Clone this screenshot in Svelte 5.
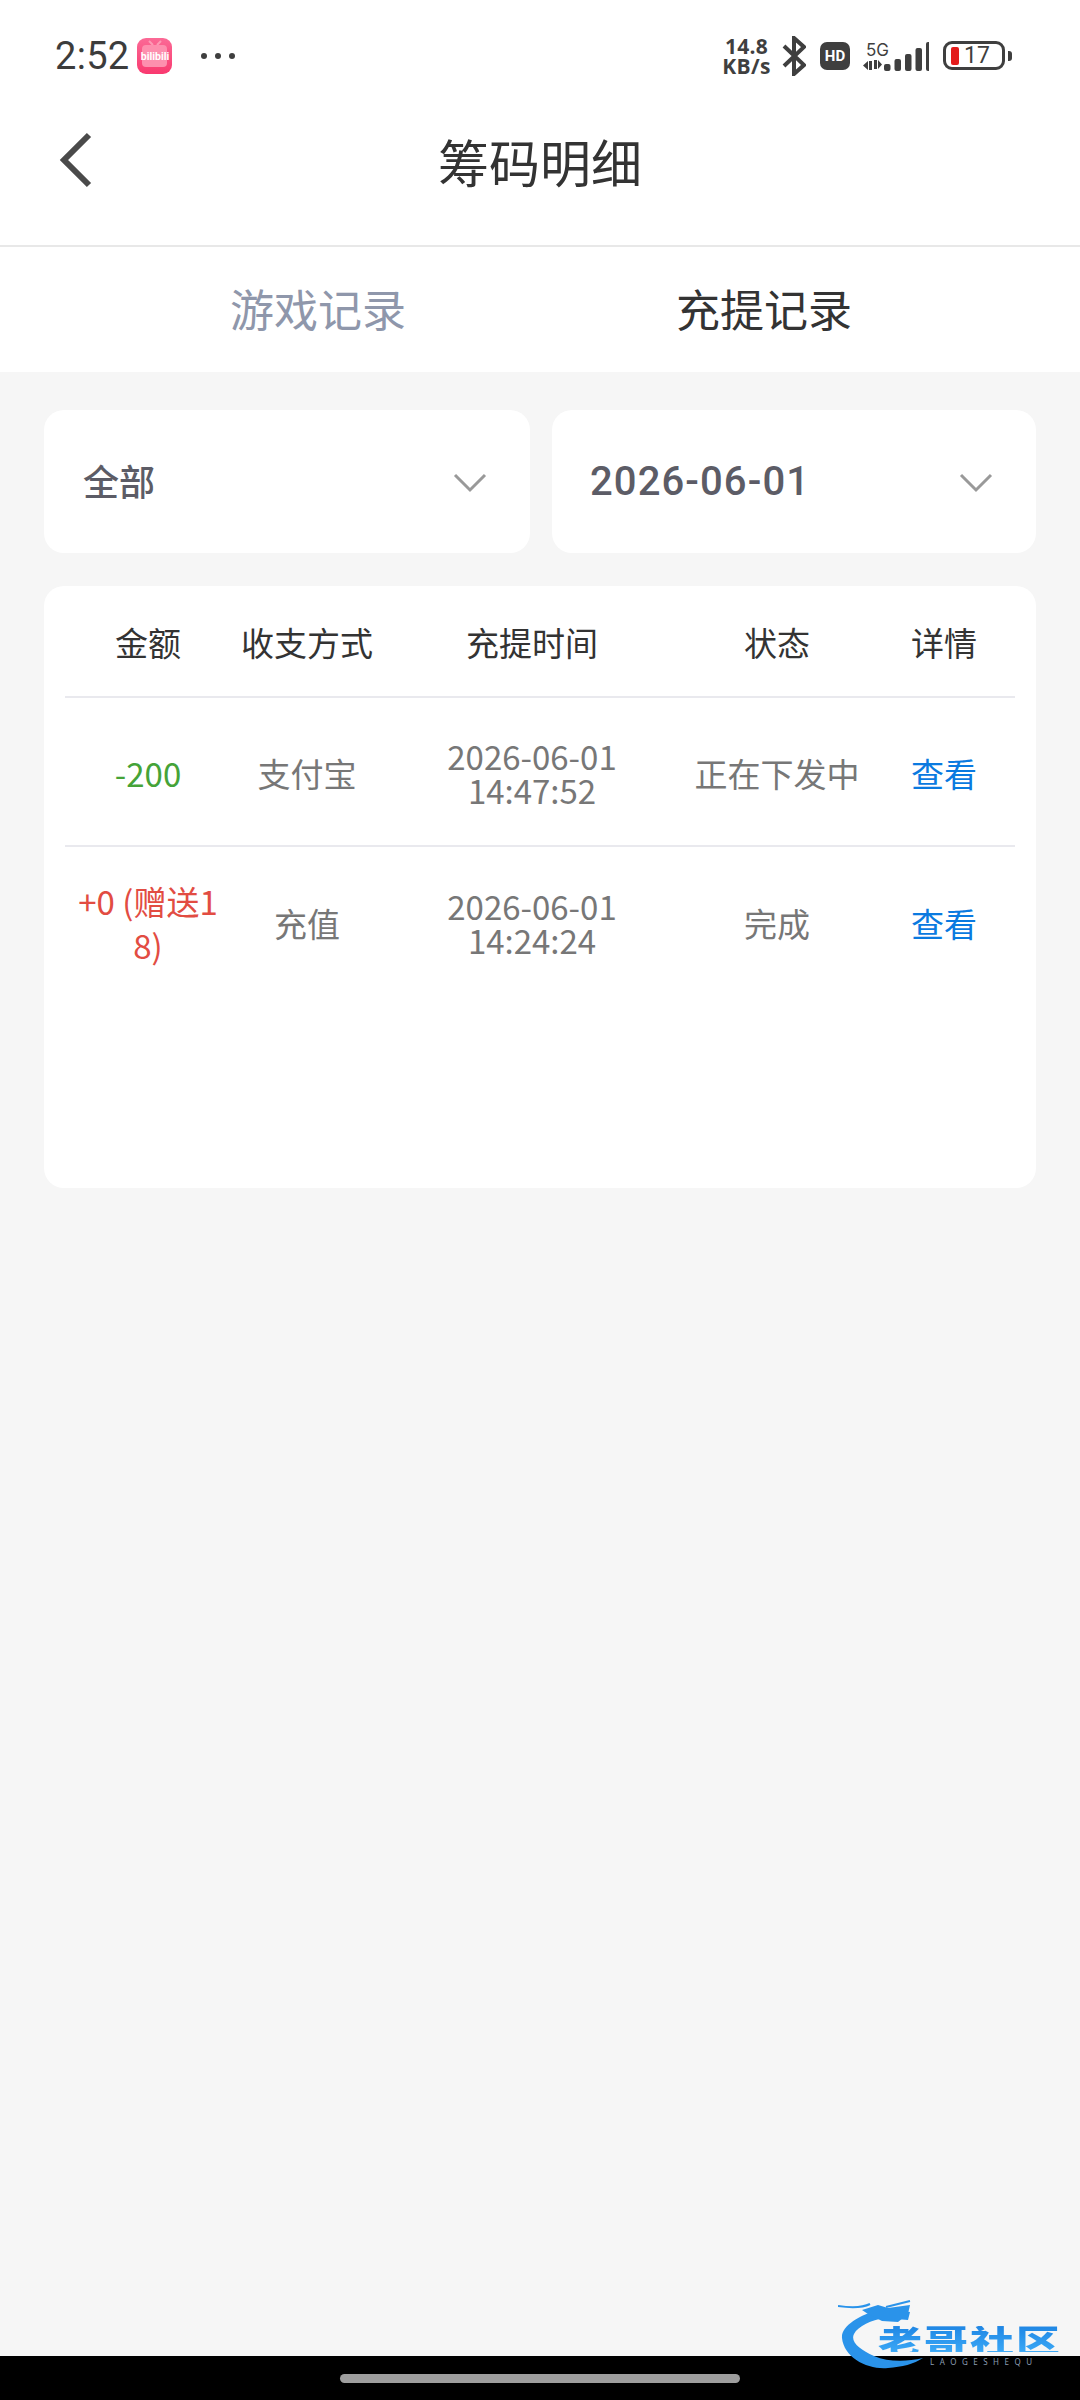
<script>
  const rows = [
    { amount: '-200', cls: 'green', method: '支付宝', date: '2026-06-01', time: '14:47:52', status: '正在下发中' },
    { amount: '+0 (赠送18)', cls: 'red', method: '充值', date: '2026-06-01', time: '14:24:24', status: '完成' }
  ];
  const bars = [7, 12, 17, 23, 29];
</script>

<div class="page">
  <div class="top">
    <div class="status">
      <div class="left">
        <span class="clock">2:52</span>
        <span class="bili">
          <svg class="tv" width="35" height="36" viewBox="0 0 35 36">
            <path d="M12 3l4 4M24 3l-4 4" stroke="#fd9ab5" stroke-width="2" fill="none"/>
            <rect x="5" y="7" width="25" height="22" rx="4" fill="#fd8fae"/>
          </svg>
          <span class="bili-t">bilibili</span>
        </span>
        <span class="dots"><i></i><i></i><i></i></span>
      </div>
      <div class="right">
        <span class="speed"><b>14.8</b><b>KB/s</b></span>
        <svg class="bt" width="24" height="40" viewBox="0 0 24 40"><path d="M2 10 L22 29 L12 38 L12 2 L22 11 L2 30" fill="none" stroke="#3f3f3f" stroke-width="4"/></svg>
        <span class="hd">HD</span>
        <span class="net">
          <span class="fiveg">5G</span>
          <svg width="66" height="30" viewBox="0 0 66 30">
            <path d="M5 20v9l-5-4.5zM6 20h3v9H6zM11 19h3v9h-3zM15 19l4 4.5-4 4.5z" fill="#3f3f3f"/>
            {#each bars as h, i}
              <rect x={21 + i * 10.5} y={30 - h} width="6.5" height={h} rx="2" fill="#3f3f3f"/>
            {/each}
          </svg>
        </span>
        <span class="battery">
          <span class="shell"><span class="fill"></span><span class="lvl">17</span></span>
          <span class="nub"></span>
        </span>
      </div>
    </div>
    <div class="nav">
      <svg class="back" width="36" height="56" viewBox="0 0 36 56"><path d="M31 3 L6 28 L31 53" fill="none" stroke="#4a4a4a" stroke-width="6"/></svg>
      <span class="title">筹码明细</span>
    </div>
  </div>

  <div class="tabs">
    <span class="tab off">游戏记录</span>
    <span class="tab on">充提记录</span>
  </div>

  <div class="content">
    <div class="filters">
      <div class="select">
        <span class="cn">全部</span>
        <svg width="34" height="22" viewBox="0 0 34 22"><path d="M2 3 L17 18 L32 3" fill="none" stroke="#999" stroke-width="3"/></svg>
      </div>
      <div class="select">
        <span class="date">2026-06-01</span>
        <svg width="34" height="22" viewBox="0 0 34 22"><path d="M2 3 L17 18 L32 3" fill="none" stroke="#999" stroke-width="3"/></svg>
      </div>
    </div>

    <div class="card">
      <div class="row head">
        <span>金额</span><span>收支方式</span><span>充提时间</span><span>状态</span><span>详情</span>
      </div>
      {#each rows as r}
        <div class="row body">
          <span class="amt {r.cls}">{r.amount}</span>
          <span>{r.method}</span>
          <span class="when"><span>{r.date}</span><span>{r.time}</span></span>
          <span>{r.status}</span>
          <span class="link">查看</span>
        </div>
      {/each}
    </div>
  </div>

  <div class="navbar"><span class="pill"></span></div>

  <div class="logo">
    <svg class="dragon" width="92" height="76" viewBox="0 0 92 76">
      <path d="M44 10 C20 18 3 28 4 40 C6 60 30 72 50 70 C64 69 76 66 85 60 C68 64 50 64 36 58 C22 52 12 44 16 36 C20 28 34 22 46 20 L70 22 L72 14 L56 12 Z" fill="#2a93ea"/>
      <path d="M24 12 L40 7 L50 10 L72 7 L70 16 L60 24 L44 23 L30 16 Z" fill="#2a93ea"/>
      <path d="M0 8 C14 10 24 10 32 6 M48 9 L72 3" fill="none" stroke="#2a93ea" stroke-width="2"/>
    </svg>
    <div class="logo-text">
      <span class="lt-cn">老哥社区</span>
      <span class="lt-en">LAOGESHEQU</span>
    </div>
  </div>
</div>

<style>
  :global(body) { margin: 0; }
  .page {
    position: relative;
    width: 1080px;
    height: 2400px;
    background: #f6f6f6;
    display: flex;
    flex-direction: column;
    font-family: "Noto Sans CJK SC", "Noto Sans", sans-serif;
    overflow: hidden;
  }
  .top { background: #fff; height: 245px; border-bottom: 2px solid #e8e8e8; }
  .status {
    height: 104px;
    box-sizing: border-box;
    padding: 7px 68px 0 55px;
    display: flex;
    justify-content: space-between;
    align-items: center;
  }
  .left { display: flex; align-items: center; height: 36px; }
  .clock { font: 400 38px/36px Roboto, sans-serif; color: #3c3c3c; letter-spacing: 0.3px; }
  .bili {
    position: relative;
    width: 35px; height: 36px; margin-left: 8px; border-radius: 9px;
    background: linear-gradient(#fb6a96, #f9396f);
    display: flex; align-items: center; justify-content: center; overflow: hidden;
  }
  .tv { position: absolute; left: 0; top: 0; }
  .bili-t { position: relative; font: 700 10.5px/12px Roboto, sans-serif; color: #fff; margin-top: 2px; }
  .dots { display: flex; gap: 8px; margin-left: 29px; }
  .dots i { width: 6px; height: 6px; border-radius: 50%; background: #3f3f3f; }
  .right { display: flex; align-items: center; height: 44px; color: #3f3f3f; }
  .speed { display: flex; flex-direction: column; align-items: center; width: 47px; margin-right: 12px; }
  .speed b { font: 700 21px/20px "Open Sans", sans-serif; letter-spacing: 0.3px; white-space: nowrap; }
  .bt { margin-right: 14px; }
  .hd {
    width: 30px; height: 28px; border-radius: 7px; background: #3f3f3f; color: #fff;
    font: 700 15px/28px Roboto, sans-serif; text-align: center; margin-right: 13px;
  }
  .net { position: relative; width: 66px; height: 30px; margin-right: 14px; }
  .net svg { position: absolute; left: 0; top: 0; }
  .fiveg { position: absolute; left: 3px; top: 0; font: 400 17px/18px Inter, sans-serif; }
  .battery { display: flex; align-items: center; }
  .shell {
    width: 62px; height: 29px; border: 3px solid #3f3f3f; border-radius: 9px;
    display: flex; align-items: center; padding-left: 5px; box-sizing: border-box;
  }
  .fill { width: 8px; height: 18px; background: #e31c1c; border-radius: 2px; }
  .lvl { font: 400 23px/23px Roboto, sans-serif; margin-left: 5px; }
  .nub { width: 4px; height: 10px; background: #3f3f3f; border-radius: 0 3px 3px 0; margin-left: 3px; }

  .nav { height: 141px; position: relative; display: flex; align-items: center; justify-content: center; padding-bottom: 27px; box-sizing: border-box; }
  .back { position: absolute; left: 58px; top: 28px; }
  .title { font-size: 51px; line-height: 60px; color: #333; }

  .tabs { height: 125px; background: #fff; display: grid; grid-template-columns: 1fr 1fr; }
  .tab { font-size: 44px; line-height: 123px; text-align: center; }
  .off { color: #8f97ab; padding-left: 96px; }
  .on { color: #333; padding-right: 92px; }

  .content { padding: 38px 44px 0; display: flex; flex-direction: column; gap: 33px; }
  .filters { display: grid; grid-template-columns: 486px 484px; gap: 22px; }
  .select {
    height: 143px; background: #fff; border-radius: 20px;
    display: flex; align-items: center; justify-content: space-between;
    padding: 0 43px 0 39px; box-sizing: border-box;
  }
  .select svg { margin-top: 2px; }
  .cn, .date { font-size: 36px; line-height: 50px; color: #5c5c66; padding-bottom: 3px; }
  .cn { font-weight: 500; }
  .date { font-family: Roboto, sans-serif; font-size: 40px; font-weight: 500; letter-spacing: 1.1px; padding-bottom: 0; margin-left: -1px; }
  .card { height: 602px; background: #fff; border-radius: 20px; padding: 0 21px; box-sizing: border-box; }
  .row {
    display: grid;
    grid-template-columns: 166px 152px 298px 192px 142px;
    align-items: center;
    text-align: center;
    border-bottom: 2px solid #e9e9ee;
    box-sizing: border-box;
    font-size: 33px;
    padding-top: 2px;
  }
  .row:last-child { border-bottom: none; }
  .head { height: 112px; color: #333; }
  .body { height: 149px; color: #777; }
  .amt { line-height: 44px; word-break: break-all; padding: 0 8px; }
  .green { color: #45a338; }
  .red { color: #e24c42; }
  .when { display: flex; flex-direction: column; line-height: 34px; }
  .link { color: #0a7ae0; }

  .logo { position: absolute; left: 838px; top: 2298px; display: flex; align-items: flex-start; }
  .dragon { flex: none; filter: blur(0.6px); }
  .logo-text { display: flex; flex-direction: column; margin: 23px 0 0 -52px; width: 190px; }
  .lt-cn {
    font-size: 44px; line-height: 36px; font-weight: 900; letter-spacing: 2px; white-space: nowrap;
    transform: scaleY(0.72);
    background: linear-gradient(#1f86e4, #3ba8f6);
    -webkit-background-clip: text; background-clip: text; color: transparent;
  }
  .lt-en { font: 400 8px/10px "Noto Sans", sans-serif; color: #8a9cb0; letter-spacing: 5.5px; margin-left: 52px; white-space: nowrap; }
  .navbar {
    position: absolute; left: 0; right: 0; bottom: 0; height: 44px; background: #000;
    display: flex; justify-content: center; padding-top: 18px; box-sizing: border-box;
  }
  .pill { width: 400px; height: 9px; border-radius: 5px; background: #9e9e9e; }
</style>
